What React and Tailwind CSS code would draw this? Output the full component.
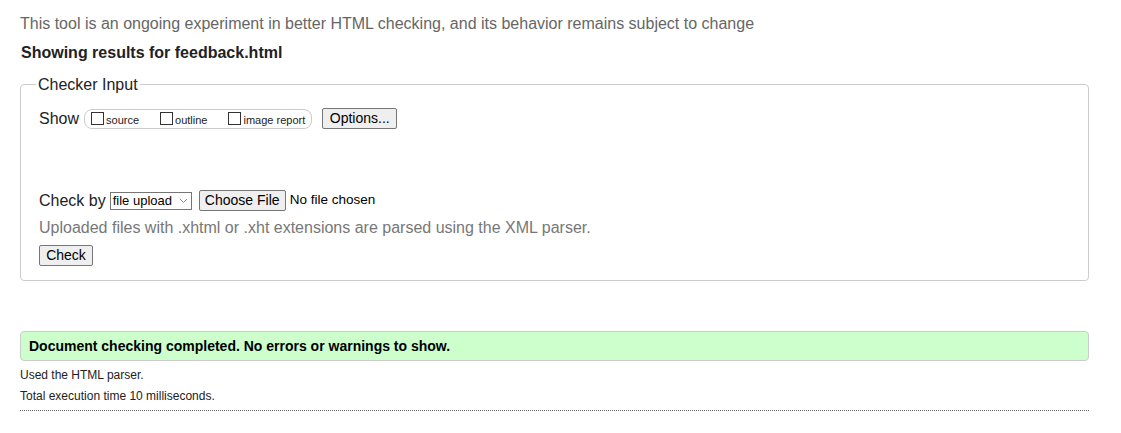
export default function App() {
  const font = { fontFamily: '"Liberation Sans", Arial, sans-serif' };
  return (
    <div className="min-h-screen bg-white text-[#222]" style={font}>
      <div className="ml-[20px] w-[1069px]">
        <p className="pt-[14px] text-[16px] leading-[19px] text-[#666]">
          This tool is an ongoing experiment in better HTML checking, and its behavior remains subject to change
        </p>
        <p className="mt-[10px] pl-[1px] text-[16px] font-bold leading-[20px] text-[#222]">
          Showing results for feedback.html
        </p>

        <fieldset className="mt-[12px] rounded-[4px] border border-[#ccc] pl-[18px] pb-[13px]">
          <legend className="ml-[-3px] px-[2px] text-[16px] leading-[19px] text-[#222]">Checker Input</legend>

          <div className="mt-[14px] flex h-[21px] items-center">
            <span className="text-[16px] leading-[19px]">Show</span>
            <div className="ml-[5px] flex h-[20px] items-center rounded-[8px] border border-[#ccc] px-[6px] text-[11px]">
              <label className="flex items-center">
                <span className="h-[13px] w-[13px] border border-[#333] bg-white" />
                <span className="ml-[2px] mt-[3px]">source</span>
              </label>
              <label className="ml-[21px] flex items-center">
                <span className="h-[13px] w-[13px] border border-[#333] bg-white" />
                <span className="ml-[2px] mt-[3px]">outline</span>
              </label>
              <label className="ml-[21px] flex items-center">
                <span className="h-[13px] w-[13px] border border-[#333] bg-white" />
                <span className="ml-[2px] mt-[3px]">image report</span>
              </label>
            </div>
            <button className="ml-[10px] h-[21px] w-[75px] rounded-[2px] border border-[#767676] bg-[#efefef] text-[14px] leading-[19px] text-black">
              Options...
            </button>
          </div>

          <div className="mt-[61px] flex h-[21px] items-center">
            <span className="text-[16px] leading-[19px]">Check by</span>
            <div className="ml-[4px] flex h-[18px] w-[82px] items-center justify-between border border-[#767676] bg-white pl-[2px] pr-[3px] text-[13px] leading-[16px] text-black">
              <span>file upload</span>
              <svg width="9" height="6" viewBox="0 0 9 6" fill="none">
                <path d="M1 1l3.5 3.5L8 1" stroke="#888" strokeWidth="1" />
              </svg>
            </div>
            <button className="ml-[7px] h-[21px] w-[87px] rounded-[2px] border border-[#767676] bg-[#efefef] text-[14px] leading-[19px] text-black">
              Choose File
            </button>
            <span className="ml-[4px] text-[13.5px] text-black">No file chosen</span>
          </div>

          <p className="mt-[8px] text-[16px] leading-[18px] text-[#777]">
            Uploaded files with .xhtml or .xht extensions are parsed using the XML parser.
          </p>

          <button className="mt-[8px] h-[21px] w-[54px] rounded-[2px] border border-[#767676] bg-[#efefef] text-[14px] leading-[19px] text-black">
            Check
          </button>
        </fieldset>

        <div className="mt-[50px] flex h-[30px] items-center rounded-[4px] border border-[#ccc] bg-[#ccffcc] pl-[8px] text-[14px] font-bold text-black">
          Document checking completed. No errors or warnings to show.
        </div>

        <div className="mt-[4px] text-[12px] leading-[20px] text-[#222]">
          <p>Used the HTML parser.</p>
          <p className="mt-[1px]">Total execution time 10 milliseconds.</p>
        </div>
        <div className="mt-[4px] border-b border-dotted border-[#666]" />
      </div>
    </div>
  );
}
